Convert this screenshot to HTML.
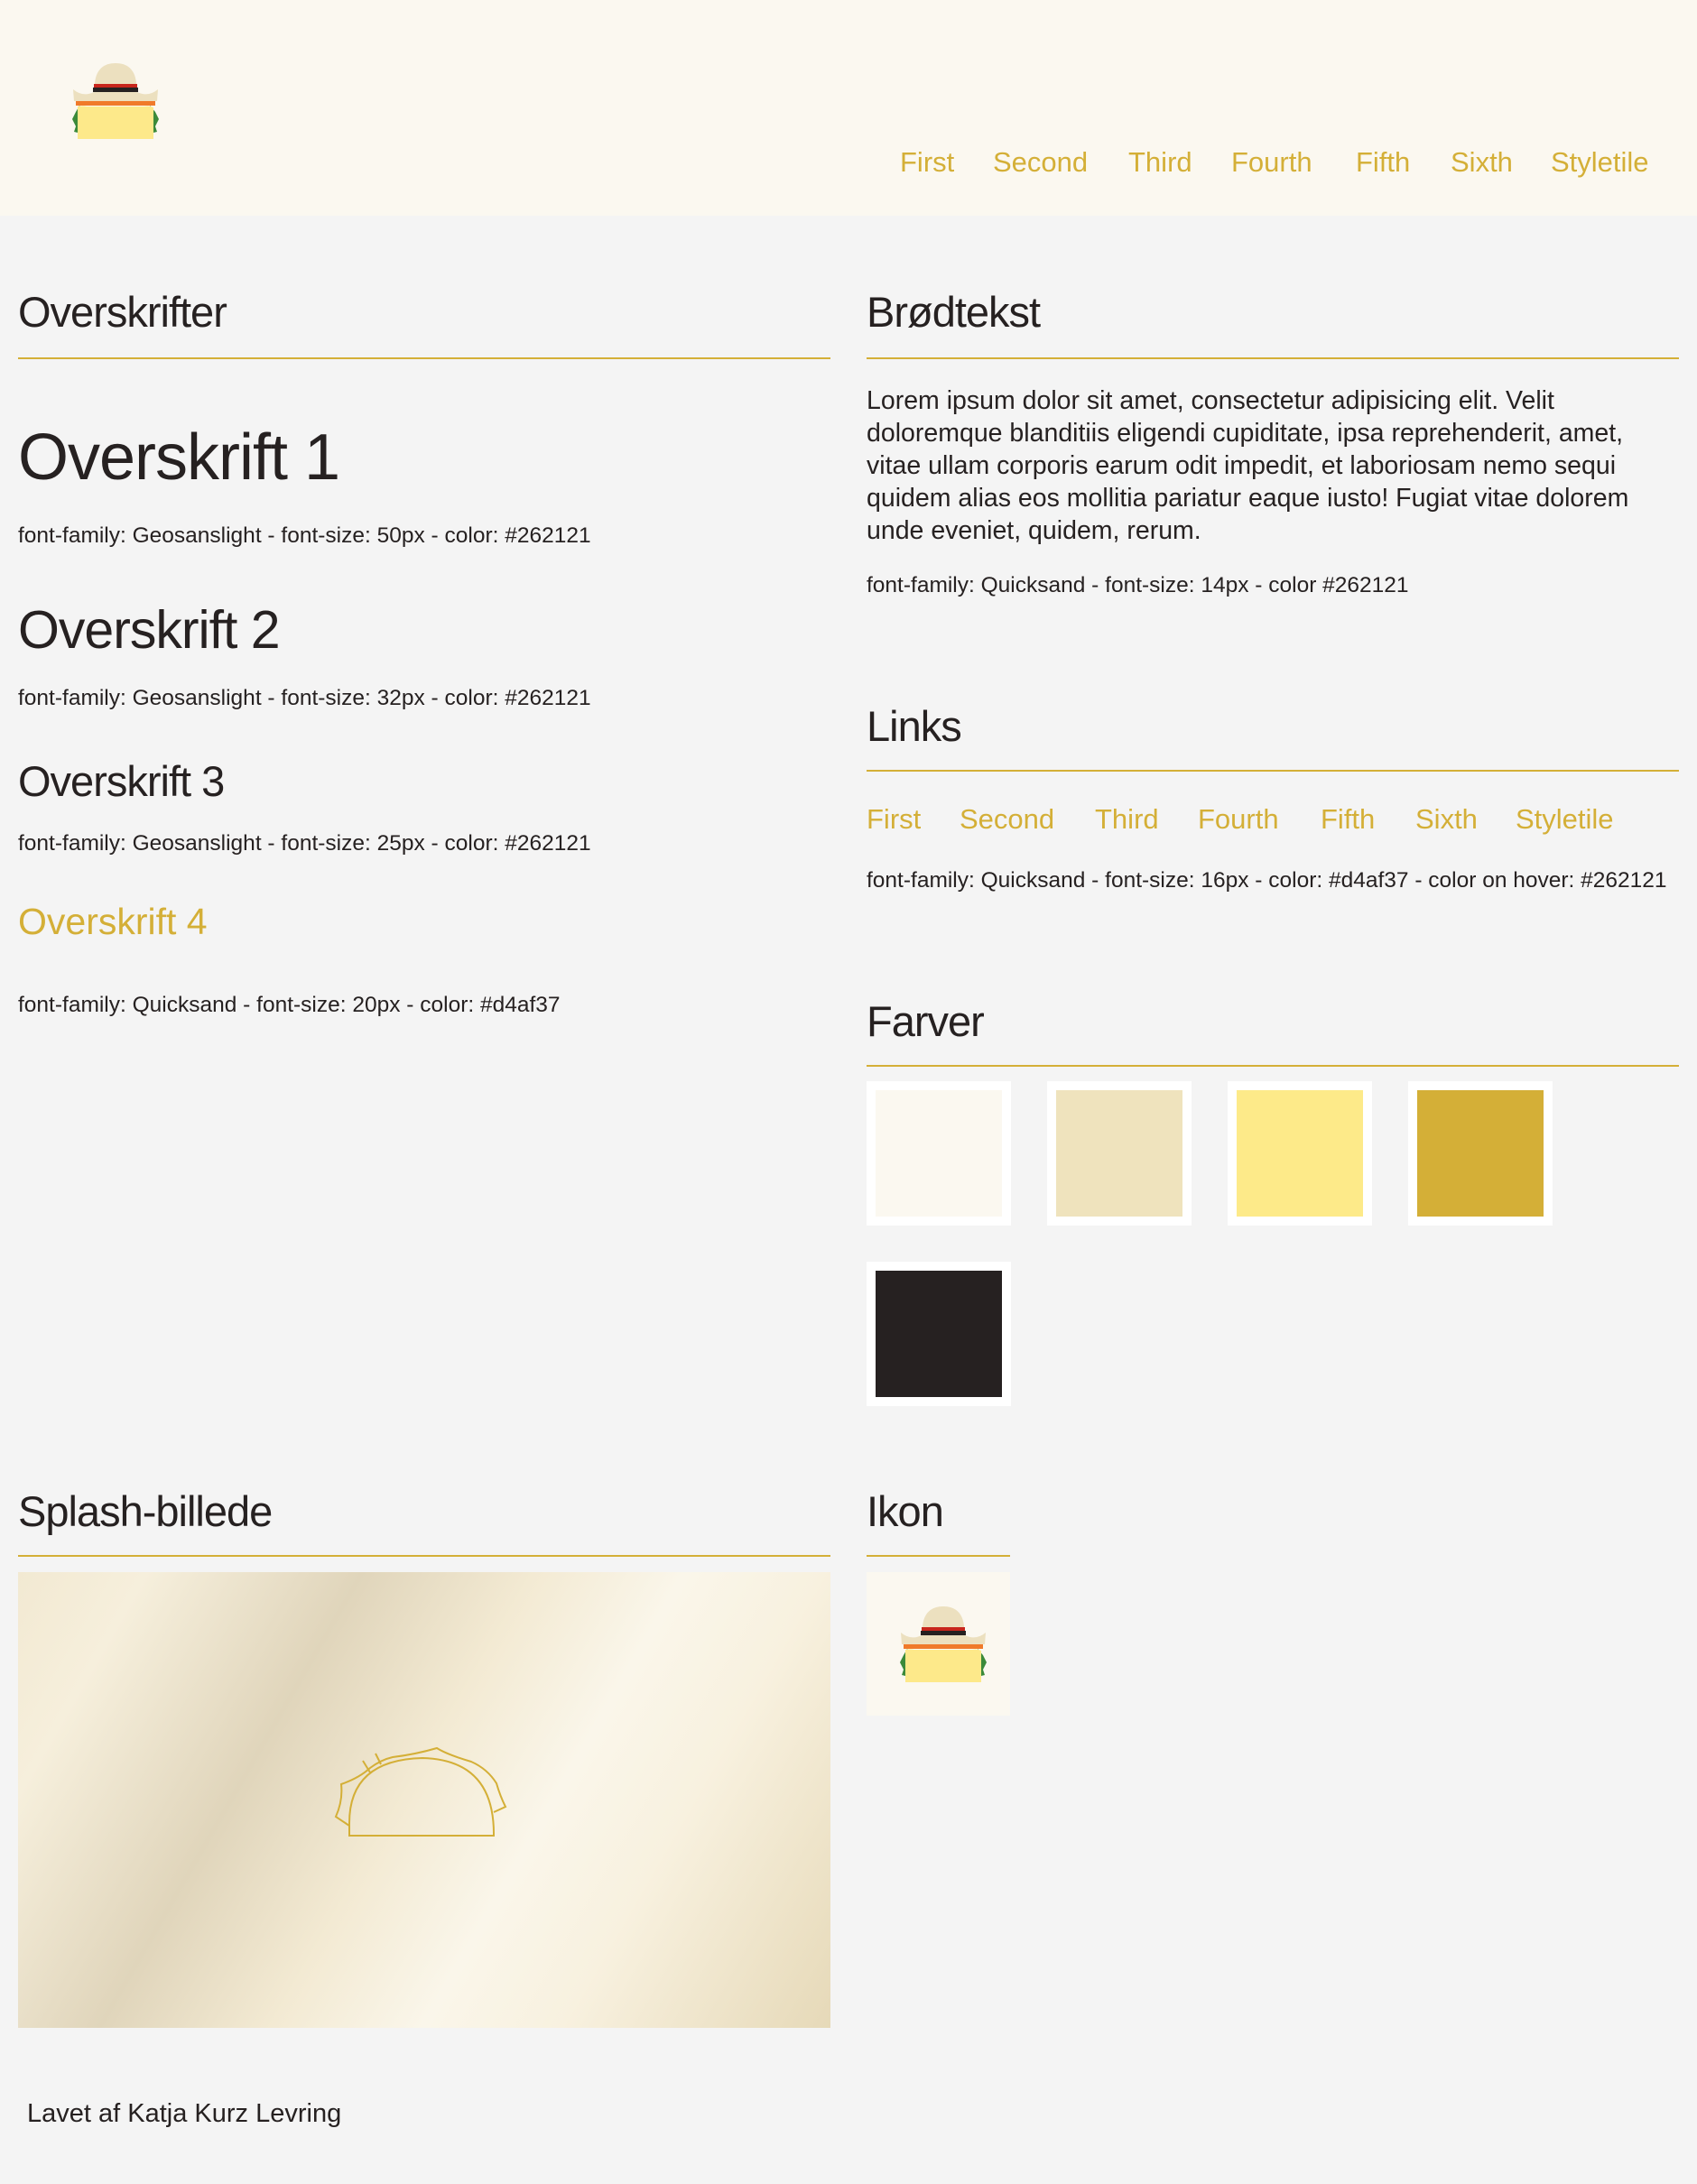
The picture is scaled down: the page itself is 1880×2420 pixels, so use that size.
<!DOCTYPE html>
<html><head><meta charset="utf-8"><style>
*{margin:0;padding:0;box-sizing:border-box}
body{width:1880px;height:2420px;background:#f4f4f4;font-family:"Liberation Sans",sans-serif;color:#262121;position:relative;overflow:hidden}
header{position:absolute;left:0;top:0;width:1880px;height:239px;background:#fbf8f0}
.a{position:absolute;white-space:nowrap}
.nav{color:#d4af37;font-size:31px}
.h{font-size:47px;letter-spacing:-1px}
.line{position:absolute;height:2px;background:#d4af37}
.cap{font-size:24.5px}
.sw{position:absolute;width:160px;height:160px;border:10px solid #fff}
</style></head><body>
<header>
<svg class="a" style="left:78px;top:68px" width="100" height="90" viewBox="0 0 100 90">
<path d="M27 34 C25 8 38 2 50 2 C62 2 75 8 73 34 Z" fill="#ece0bf"/>
<rect x="26" y="25" width="48" height="4" fill="#c8261c"/>
<rect x="25" y="29" width="50" height="5" fill="#262121"/>
<path d="M3 31 Q14 40 26 34 L74 34 Q86 40 97 31 L96 44 L4 44 Z" fill="#ece0bf"/>
<path d="M6 44 L94 44 L94 49 L6 49Z" fill="#f07a2a"/>
<path d="M10 49 L6 56 L2 64 L6 72 L4 78 L12 80 L12 52Z M88 49 L94 56 L98 64 L94 72 L96 78 L88 80 L88 52Z" fill="#3b8a3a"/>
<path d="M8 50 Q14 49 18 50 L82 50 Q88 49 92 51 L92 86 L8 86Z" fill="#fde98a"/>
</svg>
<div class="a nav" style="left:997px;top:162px">First</div>
<div class="a nav" style="left:1100px;top:162px">Second</div>
<div class="a nav" style="left:1250px;top:162px">Third</div>
<div class="a nav" style="left:1364px;top:162px">Fourth</div>
<div class="a nav" style="left:1502px;top:162px">Fifth</div>
<div class="a nav" style="left:1607px;top:162px">Sixth</div>
<div class="a nav" style="left:1718px;top:162px">Styletile</div>
</header>

<div class="a h" style="left:20px;top:318px">Overskrifter</div>
<div class="line" style="left:20px;top:396px;width:900px"></div>
<div class="a" style="left:20px;top:466px;font-size:72px;letter-spacing:-1px">Overskrift 1</div>
<div class="a cap" style="left:20px;top:580px">font-family: Geosanslight - font-size: 50px - color: #262121</div>
<div class="a" style="left:20px;top:664px;font-size:59px;letter-spacing:-1px">Overskrift 2</div>
<div class="a cap" style="left:20px;top:760px">font-family: Geosanslight - font-size: 32px - color: #262121</div>
<div class="a" style="left:20px;top:838px;font-size:47px;letter-spacing:-1px">Overskrift 3</div>
<div class="a cap" style="left:20px;top:921px">font-family: Geosanslight - font-size: 25px - color: #262121</div>
<div class="a" style="left:20px;top:998px;font-size:41px;color:#d4af37">Overskrift 4</div>
<div class="a cap" style="left:20px;top:1100px">font-family: Quicksand - font-size: 20px - color: #d4af37</div>

<div class="a h" style="left:960px;top:318px">Brødtekst</div>
<div class="line" style="left:960px;top:396px;width:900px"></div>
<div class="a" style="left:960px;top:426px;width:900px;white-space:normal;font-size:28.5px;line-height:36px">Lorem ipsum dolor sit amet, consectetur adipisicing elit. Velit doloremque blanditiis eligendi cupiditate, ipsa reprehenderit, amet, vitae ullam corporis earum odit impedit, et laboriosam nemo sequi quidem alias eos mollitia pariatur eaque iusto! Fugiat vitae dolorem unde eveniet, quidem, rerum.</div>
<div class="a cap" style="left:960px;top:635px">font-family: Quicksand - font-size: 14px - color #262121</div>

<div class="a h" style="left:960px;top:777px">Links</div>
<div class="line" style="left:960px;top:853px;width:900px"></div>
<div class="a nav" style="left:960px;top:890px">First</div>
<div class="a nav" style="left:1063px;top:890px">Second</div>
<div class="a nav" style="left:1213px;top:890px">Third</div>
<div class="a nav" style="left:1327px;top:890px">Fourth</div>
<div class="a nav" style="left:1463px;top:890px">Fifth</div>
<div class="a nav" style="left:1568px;top:890px">Sixth</div>
<div class="a nav" style="left:1679px;top:890px">Styletile</div>
<div class="a cap" style="left:960px;top:962px">font-family: Quicksand - font-size: 16px - color: #d4af37 - color on hover: #262121</div>

<div class="a h" style="left:960px;top:1104px">Farver</div>
<div class="line" style="left:960px;top:1180px;width:900px"></div>
<div class="sw" style="left:960px;top:1198px;background:#fbf8f0"></div>
<div class="sw" style="left:1160px;top:1198px;background:#efe3bd"></div>
<div class="sw" style="left:1360px;top:1198px;background:#fdea89"></div>
<div class="sw" style="left:1560px;top:1198px;background:#d4af37"></div>
<div class="sw" style="left:960px;top:1398px;background:#262121"></div>

<div class="a h" style="left:20px;top:1647px">Splash-billede</div>
<div class="line" style="left:20px;top:1723px;width:900px"></div>
<div class="a" style="left:20px;top:1742px;width:900px;height:505px;background:linear-gradient(120deg,#f2e9d2 0%,#f6efdc 12%,#e0d5bb 32%,#f3ead3 48%,#faf6ea 62%,#f8f1df 75%,#e6d9b8 100%)"></div>
<svg class="a" style="left:370px;top:1930px" width="195" height="110" viewBox="0 0 195 110">
<g fill="none" stroke="#d4af37" stroke-width="2">
<path d="M17 104 L17 90 Q17 20 98 18 Q178 20 177 104 Z"/>
<path d="M17 93 L2 83 Q10 65 8 47 Q28 40 40 29 Q52 20 65 17 Q90 14 114 7 Q125 14 152 22 Q170 30 180 46 Q184 60 190 72 L177 78"/>
<path d="M32 21 L40 34 M46 13 L52 25"/>
</g></svg>

<div class="a h" style="left:960px;top:1647px">Ikon</div>
<div class="line" style="left:960px;top:1723px;width:159px"></div>
<div class="a" style="left:960px;top:1742px;width:159px;height:159px;background:#fbf8f0">
<svg class="a" style="left:35px;top:36px" width="100" height="90" viewBox="0 0 100 90">
<path d="M27 34 C25 8 38 2 50 2 C62 2 75 8 73 34 Z" fill="#ece0bf"/>
<rect x="26" y="25" width="48" height="4" fill="#c8261c"/>
<rect x="25" y="29" width="50" height="5" fill="#262121"/>
<path d="M3 31 Q14 40 26 34 L74 34 Q86 40 97 31 L96 44 L4 44 Z" fill="#ece0bf"/>
<path d="M6 44 L94 44 L94 49 L6 49Z" fill="#f07a2a"/>
<path d="M10 49 L6 56 L2 64 L6 72 L4 78 L12 80 L12 52Z M88 49 L94 56 L98 64 L94 72 L96 78 L88 80 L88 52Z" fill="#3b8a3a"/>
<path d="M8 50 Q14 49 18 50 L82 50 Q88 49 92 51 L92 86 L8 86Z" fill="#fde98a"/>
</svg></div>

<div class="a" style="left:30px;top:2326px;font-size:29px">Lavet af Katja Kurz Levring</div>
</body></html>
